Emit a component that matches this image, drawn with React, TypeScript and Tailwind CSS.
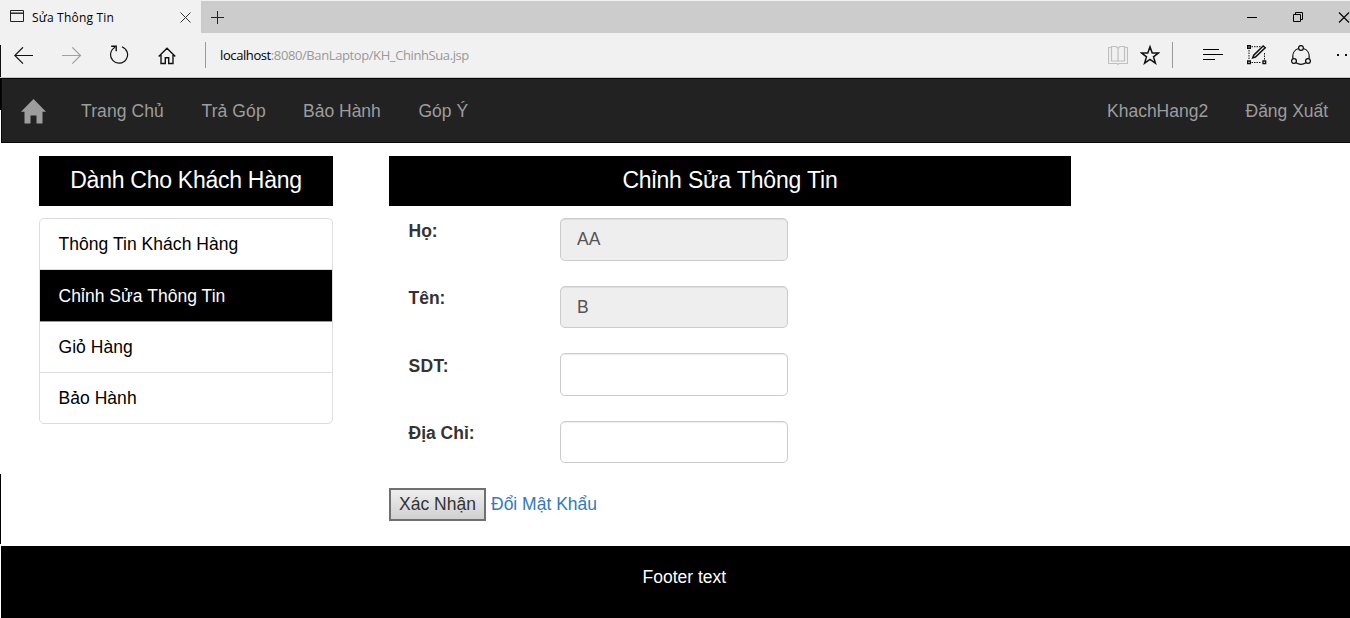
import type { ReactNode } from "react";

function Icon({ className, w, h, children }: { className: string; w: number; h: number; children: ReactNode }) {
  return (
    <svg className={`block shrink-0 ${className}`} width={w} height={h} viewBox={`0 0 ${w} ${h}`} fill="none" stroke="#111" strokeWidth={1.2}>
      {children}
    </svg>
  );
}

function TabBar() {
  return (
    <div className="flex h-[33px] w-full shrink-0 pt-px">
      <div className="flex h-8 w-[201px] shrink-0 bg-[#f1f1f1]">
        <Icon w={14} h={12} className="mt-[9px] ml-[10px]">
          <path d="M.5 .5h13v11H.5z" stroke="#222" strokeWidth={1} />
          <path d="M1 2.5h12" stroke="#888" strokeWidth={1} />
          <path d="M1 3.5h12" stroke="#333" strokeWidth={1} />
        </Icon>
        <span className="ml-2 w-[147px] whitespace-nowrap font-['Open_Sans',sans-serif] text-[12px] leading-[33px] tracking-[0.2px] text-black">
          Sửa Thông Tin
        </span>
        <Icon w={11} h={11} className="mt-[11px] ml-px">
          <path d="M.5 .5l10 10M10.500 .5l-10 10" stroke="#333" strokeWidth={1} />
        </Icon>
      </div>
      <div className="flex h-8 flex-1 overflow-hidden bg-[#ccc]">
        <Icon w={13} h={13} className="mt-[10px] ml-[10px]">
          <path d="M6.500 0v13M0 6.500h13" stroke="#222" strokeWidth={1} />
        </Icon>
        <div className="flex-1" />
        <Icon w={103} h={12} className="mt-[11px]">
          <path d="M0 5.500h10" stroke="#000" strokeWidth={1} />
          <path d="M46.500 2.500h7v7h-7zM48.500 2.500v-2h7v7h-2" stroke="#000" strokeWidth={1} />
          <path d="M92 .5l10 10M102 .5l-10 10" stroke="#000" strokeWidth={1.100} />
        </Icon>
      </div>
    </div>
  );
}

function Toolbar() {
  return (
    <div className="flex h-[45px] w-full shrink-0 overflow-hidden border-b border-[#c6c6c6]">
      <div className="mt-3 mr-3 h-8 w-px shrink-0 bg-[#111]" />
      <Icon w={20} h={18} className="mt-[14px] ml-px">
        <path d="M19 8.500H1M9 .3L.8 8.500L9 16.700" />
      </Icon>
      <Icon w={20} h={18} className="mt-[14px] ml-7">
        <path d="M0 8.500h18M10.300 .3l8.200 8.200l-8.200 8.200" stroke="#a0a0a0" />
      </Icon>
      <Icon w={20} h={20} className="mt-3 ml-[27px]">
        <path d="M12.900 1.700A8.500 8.500 0 1 1 6.100 2.200" />
        <path d="M2.200 1.300h5v5" strokeWidth={1.400} />
      </Icon>
      <Icon w={18} h={18} className="mt-[14px] ml-[29px]">
        <path d="M.7 9.600L9 1.200l8.300 8.400M3 8v8.500h4.300v-5.800h3.400v5.800H15V8" strokeWidth={1.400} />
      </Icon>
      <div className="mt-[9px] ml-[29px] h-[26px] w-px shrink-0 bg-[#999]" />
      <span className="ml-[14px] w-[260px] whitespace-nowrap font-['Open_Sans',sans-serif] text-[13px] leading-[45px] tracking-[-0.4px] text-[#999]">
        <span className="text-black">localhost</span>:8080/BanLaptop/KH_ChinhSua.jsp
      </span>
      <div className="flex-1" />
      <Icon w={20} h={19} className="mt-[13px]">
        <path d="M3 1.500H.5v16h8.500l1 1l1-1h8.500v-16H17M10 2.500v12.500M3.500 .5h4.500l2 2l2-2h4.500v14.500H3.500z" stroke="#c0c0c0" />
      </Icon>
      <Icon w={20} h={20} className="mt-3 ml-3">
        <path d="M10 1.700l2.200 6.200h6.400l-5.100 3.900l1.900 6.400L10 14.400l-5.400 3.800l1.900-6.400L1.400 7.900h6.400z" strokeWidth={1.500} />
      </Icon>
      <div className="mt-[9px] ml-3 h-[26px] w-px shrink-0 bg-[#999]" />
      <Icon w={20} h={12} className="mt-[15px] ml-[30px]">
        <path d="M0 1.500h16M0 6.500h20M0 11.500h12" stroke="#000" strokeWidth={1} />
      </Icon>
      <Icon w={20} h={20} className="mt-3 ml-6">
        <path d="M4.500 1.700h9M4.500 17.500h10M2 5v10M17.500 8v7" strokeDasharray="1.500 1" strokeWidth={1} />
        <path d="M.7 .7h2.600v2.600H.7zM.7 16h2.600v2.600H.7zM16 16h2.600v2.600H16z" strokeWidth={1.400} />
        <path d="M16.200 1l2 1.700L8.400 12l-2.700 .9l1-2.700z" strokeWidth={1.500} />
      </Icon>
      <Icon w={20} h={20} className="mt-3 ml-6">
        <circle cx={10} cy={3} r={2.400} strokeWidth={1.300} />
        <circle cx={3} cy={16} r={2.400} strokeWidth={1.300} />
        <circle cx={17} cy={16} r={2.400} strokeWidth={1.300} />
        <path d="M7.500 3.500C3.400 4.700 1.200 8.800 2 13.600M12.500 3.500c4.100 1.200 6.300 5.300 5.500 10.100M5 17.800c3 1.800 7 1.800 10 0" strokeWidth={1.300} />
      </Icon>
      <Icon w={14} h={4} className="mt-5 ml-[25px]">
        <path d="M1 1h2v2h-2zM9 1h2v2h-2z" fill="#111" stroke="none" />
      </Icon>
    </div>
  );
}

function NavBar() {
  return (
    <nav className="flex h-[65px] shrink-0 overflow-hidden border border-r-0 border-[#080808] bg-[#222] text-[17.5px] leading-[64px] whitespace-nowrap text-[#9d9d9d]">
      <Icon w={25} h={25} className="mt-5 ml-[19px]">
        <path d="M12.500 0L25 12.700h-3.500V24.500h-6v-8h-6v8h-6V12.700H0z" fill="#9d9d9d" stroke="none" />
      </Icon>
      <a className="ml-[35px] w-[120.500px] tracking-[0.1px]">Trang Chủ</a>
      <a className="w-[101.500px] tracking-[0.1px]">Trả Góp</a>
      <a className="w-[115.500px]">Bảo Hành</a>
      <a>Góp Ý</a>
      <div className="flex-1" />
      <a className="w-[138.500px]">KhachHang2</a>
      <a className="w-[104.500px]">Đăng Xuất</a>
    </nav>
  );
}

const links = ["Thông Tin Khách Hàng", "Chỉnh Sửa Thông Tin", "Giỏ Hàng", "Bảo Hành"];

function Sidebar() {
  return (
    <aside className="w-[294px] shrink-0">
      <h2 className="h-[50px] bg-black text-center text-[23px] leading-[48px] tracking-[-0.27px] whitespace-nowrap text-white">Dành Cho Khách Hàng</h2>
      <ul className="mt-3 h-[206px] overflow-hidden rounded-[5px] border border-[#ddd] text-[17.5px] leading-[50px] tracking-[0.04px] text-black">
        {links.map((text, i) => (
          <li
            key={text}
            className={
              i === 1
                ? "h-[52px] border-b border-[#999] bg-black pl-[18.5px] leading-[52px] text-white"
                : i === 3
                  ? "h-[50px] pl-[18.5px]"
                  : "h-[51px] border-b border-[#ddd] pl-[18.5px]"
            }
          >
            {text}
          </li>
        ))}
      </ul>
    </aside>
  );
}

const fields = [
  { label: "Họ:", value: "AA", locked: true, row: "h-[68px]", box: "h-[43px]", line: "leading-[27px]" },
  { label: "Tên:", value: "B", locked: true, row: "h-[67px]", box: "h-[42px]", line: "leading-[25px]" },
  { label: "SDT:", value: "", locked: false, row: "h-[68px]", box: "h-[43px]", line: "leading-[27px] tracking-[0.4px]" },
  { label: "Địa Chỉ:", value: "", locked: false, row: "h-[67px]", box: "h-[42px]", line: "leading-[25px]" },
];

function EditForm() {
  return (
    <main className="ml-14 w-[682px] shrink-0">
      <h2 className="h-[50px] bg-black text-center text-[23px] leading-[48px] tracking-[-0.16px] whitespace-nowrap text-white">Chỉnh Sửa Thông Tin</h2>
      <form className="mt-3">
        {fields.map((f) => (
          <div key={f.label} className={`flex ${f.row}`}>
            <label className={`w-[171px] pl-[19.5px] text-[17.5px] font-bold text-[#333] ${f.line}`}>{f.label}</label>
            <input
              defaultValue={f.value}
              disabled={f.locked}
              className={`${f.box} w-[228px] rounded-[5px] border border-[#ccc] px-4 text-[17.5px] text-[#555] shadow-[inset_0_1px_1px_rgba(0,0,0,0.075)] ${f.locked ? "bg-[#eee]" : "bg-white"}`}
            />
          </div>
        ))}
        <div className="flex text-[17.5px] whitespace-nowrap">
          <button type="button" className="h-[33px] w-[97px] border-2 border-[#707070] bg-linear-to-b from-[#eee] to-[#d0d0d0] pb-[2px] leading-[26px] text-[#333]">
            Xác Nhận
          </button>
          <a className="ml-[5px] leading-[32px] text-[#337ab7]">Đổi Mật Khẩu</a>
        </div>
      </form>
    </main>
  );
}

export default function App() {
  return (
    <div className="flex h-[618px] w-[1350px] flex-col overflow-hidden bg-white font-['Liberation_Sans',Arial,sans-serif]">
      <div className="flex h-[78px] shrink-0 flex-col bg-[#f1f1f1]">
        <TabBar />
        <Toolbar />
      </div>
      <div className="flex flex-1">
        <div className="flex w-px flex-col">
          <div className="h-8 bg-black" />
          <div className="mt-[364px] h-[70px] bg-black" />
        </div>
        <div className="flex min-w-0 flex-1 flex-col">
          <NavBar />
          <div className="flex h-[403px] shrink-0 pt-[13px] pl-[38px]">
            <Sidebar />
            <EditForm />
          </div>
          <footer className="h-[72px] bg-black pl-[641.500px] text-[17.5px] leading-[62px] text-white">Footer text</footer>
        </div>
      </div>
    </div>
  );
}
